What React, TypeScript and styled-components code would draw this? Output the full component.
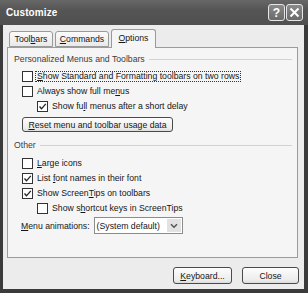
import React from 'react';
import styled, { createGlobalStyle } from 'styled-components';

const Global = createGlobalStyle`
  html, body { margin: 0; padding: 0; background: #3b3b3b; }
  body { width: 308px; height: 293px; overflow: hidden; }
`;

const Window = styled.div`
  width: 308px;
  height: 293px;
  display: flex;
  flex-direction: column;
  font-family: "Liberation Sans", Arial, sans-serif;
  font-size: 8.7px;
  color: #161616;
  background: #3b3b3b;
`;

const TitleBar = styled.div`
  height: 25px;
  flex: none;
  display: flex;
  align-items: center;
  padding: 0 5px 0 6px;
  background: linear-gradient(#676767, #555555 40%, #4f4f4f);
`;

const Title = styled.div`
  flex: 1;
  color: #ffffff;
  font-weight: bold;
  font-size: 10px;
  letter-spacing: 0.1px;
`;

const CaptionButton = styled.div`
  width: 17px;
  height: 17px;
  box-sizing: border-box;
  border: 1px solid #e6e6e6;
  border-radius: 3px;
  background: linear-gradient(#8a8a8a, #6a6a6a);
  display: flex;
  align-items: center;
  justify-content: center;
  color: #fff;
  font-weight: bold;
  font-size: 12px;
  margin-left: 1px;
`;

const Frame = styled.div`
  flex: 1;
  display: flex;
  flex-direction: column;
  padding: 0 4px 4px 3px;
`;

const Client = styled.div`
  flex: 1;
  display: flex;
  flex-direction: column;
  background: #ececec;
`;

const TabRow = styled.div`
  height: 18px;
  flex: none;
  display: flex;
  align-items: flex-end;
  padding: 4px 0 0 6px;
  position: relative;
  z-index: 1;
`;

const Tab = styled.div<{ $active?: boolean; $w: number }>`
  width: ${(p) => p.$w}px;
  height: ${(p) => (p.$active ? 19 : 16)}px;
  margin-bottom: ${(p) => (p.$active ? -1 : 0)}px;
  margin-right: ${(p) => (p.$active ? 0 : 2)}px;
  box-sizing: border-box;
  border: 1px solid #9a9a9a;
  border-bottom: ${(p) => (p.$active ? 'none' : '1px solid #9a9a9a')};
  border-radius: 3px 3px 0 0;
  background: ${(p) => (p.$active ? '#f5f5f5' : 'linear-gradient(#fbfbfb, #e9e9e9)')};
  display: flex;
  align-items: center;
  justify-content: center;
  padding-bottom: ${(p) => (p.$active ? 2 : 0)}px;
`;

const Panel = styled.div`
  height: 211px;
  flex: none;
  margin: 0 6px 0 4px;
  box-sizing: border-box;
  border: 1px solid #9c9c9c;
  background: #f5f5f5;
  display: flex;
  flex-direction: column;
  padding: 4px 5px 0 6px;
`;

const GroupHeader = styled.div<{ $top?: number }>`
  height: 14px;
  display: flex;
  align-items: center;
  gap: 4px;
  margin-top: ${(p) => p.$top ?? 0}px;
  color: #3c3c3c;
  &::after {
    content: '';
    flex: 1;
    height: 1px;
    background: #d2d2d2;
  }
`;

const CheckRow = styled.div<{ $indent: number; $top?: number }>`
  height: 15px;
  display: flex;
  align-items: center;
  gap: 2px;
  padding-left: ${(p) => p.$indent}px;
  margin-top: ${(p) => p.$top ?? 0}px;
`;

const Box = styled.div`
  width: 11px;
  height: 11px;
  box-sizing: border-box;
  border: 1px solid #333333;
  background: #ffffff;
  flex: none;
  display: flex;
  align-items: center;
  justify-content: center;
`;

const Label = styled.span<{ $focus?: boolean }>`
  padding: 0 1px;
  line-height: 9px;
  border: 1px ${(p) => (p.$focus ? 'dotted #333' : 'solid transparent')};
  white-space: nowrap;
`;

const PushButton = styled.div<{ $w: number }>`
  width: ${(p) => p.$w}px;
  box-sizing: border-box;
  border: 1px solid #4a4a4a;
  border-radius: 3px;
  background: linear-gradient(#fdfdfd, #ececec 80%, #dcdcdc);
  display: flex;
  align-items: center;
  justify-content: center;
`;

const ResetButton = styled(PushButton)`
  height: 15px;
  margin: 3px 0 0 8px;
`;

const ComboRow = styled.div`
  height: 17px;
  margin-top: 1px;
  display: flex;
  align-items: center;
  padding-left: 7px;
  gap: 3px;
`;

const Combo = styled.div`
  width: 89px;
  height: 17px;
  box-sizing: border-box;
  border: 1px solid #8c8c8c;
  background: #ffffff;
  display: flex;
  align-items: center;
  padding: 0 1px 0 2px;
  margin-left: 1px;
`;

const ComboText = styled.span`
  flex: 1;
`;

const DropButton = styled.div`
  width: 14px;
  height: 13px;
  background: #e2e2e2;
  display: flex;
  align-items: center;
  justify-content: center;
`;

const Footer = styled.div`
  display: flex;
  justify-content: flex-end;
  gap: 10px;
  padding-right: 5px;
  margin-top: 9px;
`;

const DialogButton = styled(PushButton)`
  height: 17px;
`;

const U = styled.span`
  text-decoration: underline;
`;

const Check = () => (
  <svg width="9" height="9" viewBox="0 0 9 9">
    <polyline points="1.5,4.5 3.5,6.8 7.8,1.8" fill="none" stroke="#222" strokeWidth="1.3" />
  </svg>
);

const CheckItem = ({
  checked,
  indent,
  top,
  focus,
  children,
}: {
  checked?: boolean;
  indent: number;
  top?: number;
  focus?: boolean;
  children: React.ReactNode;
}) => (
  <CheckRow $indent={indent} $top={top}>
    <Box>{checked && <Check />}</Box>
    <Label $focus={focus}>{children}</Label>
  </CheckRow>
);

export default function App() {
  return (
    <>
      <Global />
      <Window>
        <TitleBar>
          <Title>Customize</Title>
          <CaptionButton>?</CaptionButton>
          <CaptionButton>
            <svg width="11" height="11" viewBox="0 0 11 11">
              <path d="M1.5 1.5 L9.5 9.5 M9.5 1.5 L1.5 9.5" stroke="#fff" strokeWidth="2" />
            </svg>
          </CaptionButton>
        </TitleBar>
        <Frame>
          <Client>
            <TabRow>
              <Tab $w={44}>
                <span>
                  Tool<U>b</U>ars
                </span>
              </Tab>
              <Tab $w={54}>
                <span>
                  <U>C</U>ommands
                </span>
              </Tab>
              <Tab $w={45} $active>
                <span>
                  <U>O</U>ptions
                </span>
              </Tab>
            </TabRow>
            <Panel>
              <GroupHeader>Personalized Menus and Toolbars</GroupHeader>
              <CheckItem indent={8} top={3} focus>
                <U>S</U>how Standard and Formatting toolbars on two rows
              </CheckItem>
              <CheckItem indent={8}>
                Always show full me<U>n</U>us
              </CheckItem>
              <CheckItem indent={23} checked>
                Show fu<U>l</U>l menus after a short delay
              </CheckItem>
              <ResetButton $w={151}>
                <span>
                  <U>R</U>eset menu and toolbar usage data
                </span>
              </ResetButton>
              <GroupHeader $top={6}>Other</GroupHeader>
              <CheckItem indent={8} top={4}>
                <U>L</U>arge icons
              </CheckItem>
              <CheckItem indent={8} checked>
                List <U>f</U>ont names in their font
              </CheckItem>
              <CheckItem indent={8} checked>
                Show Screen<U>T</U>ips on toolbars
              </CheckItem>
              <CheckItem indent={23}>
                Show s<U>h</U>ortcut keys in ScreenTips
              </CheckItem>
              <ComboRow>
                <span>
                  <U>M</U>enu animations:
                </span>
                <Combo>
                  <ComboText>(System default)</ComboText>
                  <DropButton>
                    <svg width="8" height="6" viewBox="0 0 8 6">
                      <path d="M1 1.2 L4 4.2 L7 1.2" fill="none" stroke="#555" strokeWidth="1.5" />
                    </svg>
                  </DropButton>
                </Combo>
              </ComboRow>
            </Panel>
            <Footer>
              <DialogButton $w={59}>
                <span>
                  <U>K</U>eyboard...
                </span>
              </DialogButton>
              <DialogButton $w={57}>Close</DialogButton>
            </Footer>
          </Client>
        </Frame>
      </Window>
    </>
  );
}
